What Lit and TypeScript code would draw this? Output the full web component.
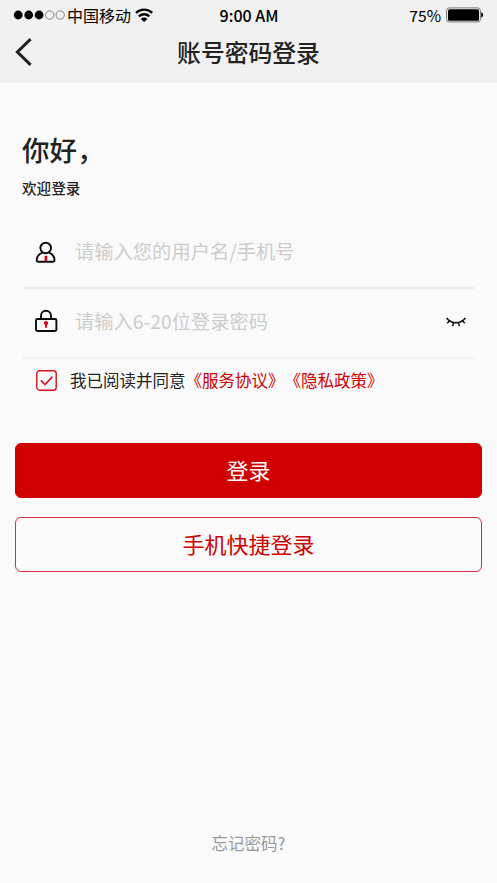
import { LitElement, html, css } from "lit";
import { customElement, state } from "lit/decorators.js";

@customElement("status-bar")
export class StatusBar extends LitElement {
  static styles = css`
    :host {
      display: grid;
      grid-template-columns: 1fr auto 1fr;
      align-items: center;
      height: 30px;
      padding: 0 13px 0 14px;
      font-size: 16px;
      line-height: 30px;
      color: #000;
    }
    .left, .right { display: flex; align-items: center; }
    .right { justify-content: flex-end; }
    .carrier { margin-left: 2px; }
    .wifi { margin-left: 4px; }
    .time { font-weight: 500; }
    .percent { font-size: 15.6px; }
    .battery { margin-left: 5px; }
    svg { display: block; flex: none; }
    .signal { overflow: visible; }
  `;

  render() {
    return html`
      <div class="left">
        <svg class="signal" width="51" height="10" viewBox="0 0 51 10">
          <circle cx="4.2" cy="5" r="4.4" />
          <circle cx="14.7" cy="5" r="4.4" />
          <circle cx="25.1" cy="5" r="4.4" />
          <circle cx="35.7" cy="5" r="4.2" fill="none" stroke="#222" stroke-width=".5" />
          <circle cx="46.2" cy="5" r="4.2" fill="none" stroke="#222" stroke-width=".5" />
        </svg>
        <span class="carrier">中国移动</span>
        <svg class="wifi" width="18" height="14" viewBox="0 0 18 14">
          <g fill="none" stroke="#000" stroke-width="2.3">
            <path d="M1 4.8a11.7 11.7 0 0 1 16.2 0" />
            <path d="M3.9 8.3a7.6 7.6 0 0 1 10.4 0" />
          </g>
          <path d="M5.8 10.9a4.5 4.5 0 0 1 6.6 0L9.1 14z" />
        </svg>
      </div>
      <span class="time">9:00 AM</span>
      <div class="right">
        <span class="percent">75%</span>
        <svg class="battery" width="38" height="16" viewBox="0 0 38 16">
          <rect x=".6" y=".9" width="33.8" height="14" rx="2.5" fill="#f1f1f1" stroke="#777" stroke-width="1" />
          <rect x="2" y="2.2" width="31" height="11.5" rx="1.5" />
          <path d="M35.2 5.2c2.6 .8 2.6 4.6 0 5.4z" />
        </svg>
      </div>
    `;
  }
}

@customElement("app-root")
export class AppRoot extends LitElement {
  @state() private agreed = true;

  static styles = css`
    :host {
      display: flex;
      flex-direction: column;
      box-sizing: border-box;
      height: 883px;
      overflow: hidden;
      background: #fafafa;
      color: #222;
      font-family: "Noto Sans CJK SC", sans-serif;
    }
    svg { display: block; flex: none; }
    header { height: 83px; background: #f1f1f1; }
    .nav {
      display: grid;
      grid-template-columns: 40px 1fr 40px;
      align-items: center;
      height: 43px;
      padding-left: 14px;
      padding-right: 14px;
    }
    h1, h2, p { margin: 0; }
    h1 {
      font-size: 23.8px;
      font-weight: 500;
      line-height: 43px;
      text-align: center;
    }
    .greeting { padding: 46px 22px 0; }
    h2 { font-size: 27.5px; font-weight: 500; line-height: 40px; }
    .welcome { margin-top: 8px; font-size: 14.6px; font-weight: 500; line-height: 22px; }
    .form { margin: 16px 22px 0; }
    .field {
      display: flex;
      align-items: center;
      box-sizing: border-box;
      height: 70px;
      padding: 0 9px 4px 12px;
      border-bottom: 2px solid #f0f0f0;
    }
    .field.user { height: 74px; padding-bottom: 0; border-bottom-color: #eee; }
    .user svg { margin-top: 3px; }
    .eye { margin-top: 1px; }
    .hint {
      flex: 1;
      margin-left: 17px;
      font-size: 19.3px;
      line-height: 28px;
      color: #ccc;
    }
    .agree {
      display: flex;
      align-items: center;
      height: 42px;
      padding-left: 14px;
      font-size: 16.5px;
      line-height: 24px;
    }
    .terms { margin-left: 13px; white-space: nowrap; text-spacing-trim: space-all; }
    .link { color: #d00000; }
    .actions {
      display: flex;
      flex-direction: column;
      gap: 19px;
      margin: 42px 15px 0;
    }
    .button {
      box-sizing: border-box;
      height: 55px;
      border: 1px solid #dc2b3c;
      border-radius: 6px;
      font-size: 22px;
      line-height: 51px;
      text-align: center;
      color: #d00000;
    }
    .button.primary { background: #d00000; border-color: #d00000; color: #fff; }
    .forgot {
      margin-top: auto;
      padding-bottom: 28px;
      font-size: 16.5px;
      line-height: 24px;
      text-align: center;
      color: #999;
    }
  `;

  render() {
    return html`
      <header>
        <status-bar></status-bar>
        <div class="nav">
          <svg width="20" height="28" viewBox="0 0 20 28">
            <path d="M16.6 1.2 3.4 14l13.2 12.8" fill="none" stroke="#222" stroke-width="3" />
          </svg>
          <h1>账号密码登录</h1>
        </div>
      </header>
      <section class="greeting">
        <h2>你好，</h2>
        <p class="welcome">欢迎登录</p>
      </section>
      <section class="form">
        <div class="field user">
          <svg width="24" height="24" viewBox="0 0 24 24">
            <g fill="none" stroke="#0c0c0c" stroke-width="1.9">
              <circle cx="11.7" cy="7" r="5.3" />
              <path d="M8.4 11.7C5 12.9 2.9 15.7 2.7 18.9c0 1.3.6 1.8 1.7 1.8h14.4c1.1 0 1.7-.5 1.7-1.8-.2-3.2-2.2-6-5.5-7.2" />
            </g>
            <path d="M10.6 14.8h2.6v5.2h-2.6z" fill="#d9001b" />
          </svg>
          <span class="hint">请输入您的用户名/手机号</span>
        </div>
        <div class="field">
          <svg width="24" height="24" viewBox="0 0 24 24">
            <g fill="none" stroke="#0c0c0c" stroke-width="1.9">
              <rect x="2" y="10" width="20.4" height="12" rx="1.4" />
              <path d="M7 10V6.8a5 5 0 0 1 10 0V10" />
            </g>
            <path d="M10 14.8a2.1 2.1 0 1 1 3.1 1.2v2.8h-2V16a2 2 0 0 1-1.1-1.2z" fill="#d9001b" />
          </svg>
          <span class="hint">请输入6-20位登录密码</span>
          <svg class="eye" width="20" height="10" viewBox="0 0 20 10">
            <path d="M.6 1C5.6 7.3 14.4 7.3 19.4 1M3.6 3.8 1.2 6.3M7.5 5.6 6.6 9M12.5 5.6l.9 3.4M16.4 3.8l2.4 2.5" fill="none" stroke="#0c0c0c" stroke-width="1.5" />
          </svg>
        </div>
        <div class="agree" @click=${() => (this.agreed = !this.agreed)}>
          <svg width="21" height="21" viewBox="0 0 21 21" fill="none" stroke="#d9101b">
            <rect x=".8" y=".8" width="19.4" height="19.4" rx="2.8" stroke-width="1.4" />
            <path d="M4.8 10.4 9 14.6l7.4-8" stroke-width="1.6" visibility=${this.agreed ? "visible" : "hidden"} />
          </svg>
          <span class="terms">我已阅读并同意<span class="link">《服务协议》</span><span class="link">《隐私政策》</span></span>
        </div>
      </section>
      <div class="actions">
        <div class="button primary">登录</div>
        <div class="button">手机快捷登录</div>
      </div>
      <div class="forgot">忘记密码?</div>
    `;
  }
}
